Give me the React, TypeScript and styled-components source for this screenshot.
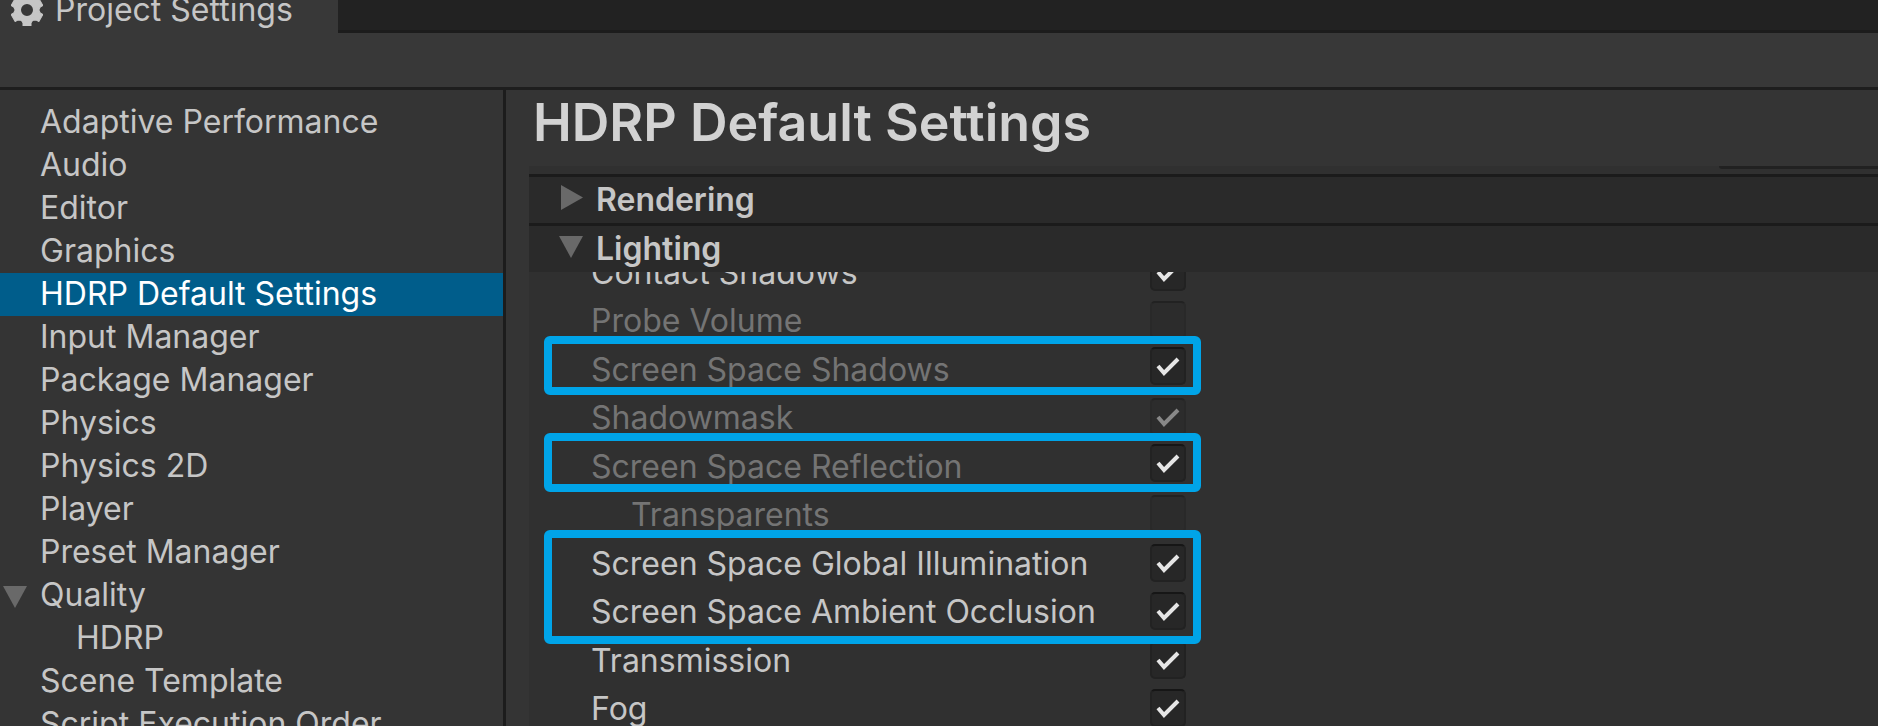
import React from "react";
import styled, { createGlobalStyle, css } from "styled-components";

const GlobalStyle = createGlobalStyle`
  *, *::before, *::after { box-sizing: border-box; }
  body {
    margin: 0;
    background: #303030;
    color: #c6c6c6;
    font-family: Inter, "Liberation Sans", sans-serif;
    font-size: 32px;
    line-height: 40px;
    overflow: hidden;
  }
`;

const Window = styled.div`
  display: flex;
  flex-direction: column;
  height: 100vh;
  overflow: hidden;
  background: #383838;
`;

const TabBar = styled.div`
  display: flex;
  flex: none;
  height: 33px;
  white-space: nowrap;
`;

const Tab = styled.button`
  display: flex;
  align-items: flex-end;
  width: 338px;
  padding: 0 0 3px 11px;
  gap: 12px;
  border: 0;
  background: #383838;
  color: inherit;
  font: inherit;
  text-align: left;
`;

const TabIcon = styled.svg`
  flex: none;
  width: 32px;
  height: 32px;
  margin-bottom: 4px;
`;

const TabStrip = styled.div`
  flex: 1;
  background: #222222;
  border-bottom: 3px solid #1c1c1c;
`;

const Toolbar = styled.div`
  flex: none;
  height: 57px;
  border-bottom: 3px solid #1e1e1e;
`;

const Panes = styled.div`
  display: flex;
  flex: 1;
  min-height: 0;
  overflow: hidden;
  background: #343434;
`;

const Sidebar = styled.nav`
  flex: none;
  width: 506px;
  padding-top: 11px;
  border-right: 3px solid #1c1c1c;
`;

const NavList = styled.ul`
  margin: 0;
  padding: 0;
  list-style: none;
`;

const NavLink = styled.a<{ $selected?: boolean; $nested?: boolean }>`
  display: flex;
  align-items: center;
  height: 43px;
  padding: 0 0 2px ${(p) => (p.$nested ? 76 : 3)}px;
  color: ${(p) => (p.$selected ? "#ffffff" : "inherit")};
  background: ${(p) => (p.$selected ? "#005d8b" : "transparent")};
  text-decoration: none;
  white-space: nowrap;
`;

const NavArrow = styled.span`
  display: flex;
  flex: none;
  width: 37px;
  padding-top: 4px;
`;

const Main = styled.main`
  flex: 1;
  min-width: 0;
  padding-left: 23px;
`;

const Title = styled.h1`
  margin: 0;
  padding: 1px 0 11px 4px;
  font-size: 52px;
  line-height: 64px;
  font-weight: 600;
  color: #d2d2d2;
`;

const Panel = styled.div`
  background: #303030;
`;

const ScrollEdge = styled.div`
  height: 8px;
  &::before {
    content: "";
    display: block;
    width: 159px;
    height: 3px;
    margin-left: auto;
    background: #212121;
    border-radius: 0 0 0 3px;
  }
`;

const SectionHeader = styled.h2`
  margin: 0;
  font-size: 32px;
  border-top: 3px solid #1b1b1b;
  background: #2a2a2a;
`;

const SectionButton = styled.button`
  display: flex;
  align-items: center;
  width: 100%;
  height: 46px;
  padding: 0 0 0 30px;
  border: 0;
  background: none;
  color: inherit;
  font: inherit;
  font-weight: 600;
  text-align: left;
`;

const SectionArrow = styled.span`
  display: flex;
  flex: none;
  width: 37px;
  padding-bottom: 5px;
`;

const SectionBody = styled.div`
  overflow: hidden;
`;

const OptionList = styled.div`
  margin-top: -24px;
`;

const Option = styled.label<{ $tall?: boolean; $disabled?: boolean; $nested?: boolean }>`
  display: flex;
  align-items: flex-start;
  width: 657px;
  height: ${(p) => (p.$tall ? 49 : 48)}px;
  padding-left: ${(p) => (p.$nested ? 102 : 62)}px;
  line-height: 50px;
  white-space: nowrap;
  color: ${(p) => (p.$disabled ? "#747474" : "inherit")};
`;

const Highlight = styled.div<{ $multi?: boolean }>`
  position: relative;
  width: 672px;
  &::after {
    content: "";
    position: absolute;
    z-index: 1;
    top: -9px;
    left: 15px;
    right: 0;
    bottom: ${(p) => (p.$multi ? -8 : -2)}px;
    border: 8px solid #00a4e8;
    border-radius: 6px;
    pointer-events: none;
  }
`;

const Check = styled.span<{ $raised?: boolean }>`
  display: grid;
  flex: none;
  margin-top: ${(p) => (p.$raised ? 2 : 5)}px;
  margin-left: auto;
  & > * { grid-area: 1 / 1; }
`;

const CheckInput = styled.input<{ $dim?: boolean }>`
  appearance: none;
  width: 36px;
  height: 38px;
  margin: 0;
  border: 2px solid #222222;
  border-top-color: #161616;
  border-radius: 5px;
  background: #272727;
  ${(p) =>
    p.$dim &&
    css`
      border-color: #292929;
      border-top-color: #222222;
      background: #2c2c2c;
    `}
`;

const CheckMark = styled.svg`
  width: 36px;
  height: 38px;
  pointer-events: none;
`;

function Gear() {
  return (
    <TabIcon viewBox="-16 -16 32 32" aria-hidden="true">
      <circle r="9" fill="none" stroke="#c6c6c6" strokeWidth="6" />
      {[0, 60, 120, 180, 240, 300].map((a) => (
        <path key={a} d="M-6 -10L-4 -13V-16H4V-13L6 -10Z" fill="#c6c6c6" stroke="#c6c6c6" strokeLinejoin="round" transform={`rotate(${a})`} />
      ))}
    </TabIcon>
  );
}

function DownArrow() {
  return (
    <svg width="24" height="22" viewBox="0 0 24 22" aria-hidden="true">
      <path d="M0 0H24L12 22Z" fill="#696969" />
    </svg>
  );
}

function RightArrow() {
  return (
    <svg width="24" height="25" viewBox="0 0 24 25" aria-hidden="true">
      <path d="M2 0V25L24 12.5Z" fill="#696969" />
    </svg>
  );
}

type Item = {
  name: string;
  checked?: boolean;
  dimText?: boolean;
  dimBox?: boolean;
  nested?: boolean;
  tall?: boolean;
  raised?: boolean;
};

function OptionRow({ name, checked, dimText, dimBox, nested, tall, raised }: Item) {
  return (
    <Option $tall={tall} $disabled={dimText} $nested={nested}>
      {name}
      <Check $raised={raised}>
        <CheckInput type="checkbox" defaultChecked={checked} disabled={dimBox} $dim={dimBox} />
        {checked && (
          <CheckMark viewBox="0 0 36 38" aria-hidden="true">
            <path d="M8 19L14 26L28 12" fill="none" stroke={dimBox ? "#888888" : "#e6e6e6"} strokeWidth="4" />
          </CheckMark>
        )}
      </Check>
    </Option>
  );
}

const pages = [
  "Adaptive Performance",
  "Audio",
  "Editor",
  "Graphics",
  "HDRP Default Settings",
  "Input Manager",
  "Package Manager",
  "Physics",
  "Physics 2D",
  "Player",
  "Preset Manager",
  "Quality",
  "HDRP",
  "Scene Template",
  "Script Execution Order",
];

export default function App() {
  return (
    <>
      <GlobalStyle />
      <Window>
        <TabBar>
          <Tab type="button">
            <Gear />
            Project Settings
          </Tab>
          <TabStrip />
        </TabBar>
        <Toolbar />
        <Panes>
          <Sidebar>
            <NavList>
              {pages.map((page) => (
                <li key={page}>
                  <NavLink
                    href="#"
                    $selected={page === "HDRP Default Settings"}
                    $nested={page === "HDRP"}
                  >
                    {page !== "HDRP" && <NavArrow>{page === "Quality" && <DownArrow />}</NavArrow>}
                    {page}
                  </NavLink>
                </li>
              ))}
            </NavList>
          </Sidebar>
          <Main>
            <Title>HDRP Default Settings</Title>
            <Panel>
              <ScrollEdge />
              <SectionHeader>
                <SectionButton type="button" aria-expanded={false}>
                  <SectionArrow><RightArrow /></SectionArrow>
                  Rendering
                </SectionButton>
              </SectionHeader>
              <SectionHeader>
                <SectionButton type="button" aria-expanded={true}>
                  <SectionArrow><DownArrow /></SectionArrow>
                  Lighting
                </SectionButton>
              </SectionHeader>
              <SectionBody>
                <OptionList>
                  <OptionRow name="Contact Shadows" checked />
                  <OptionRow name="Probe Volume" dimText dimBox tall />
                  <Highlight>
                    <OptionRow name="Screen Space Shadows" checked dimText raised />
                  </Highlight>
                  <OptionRow name="Shadowmask" checked dimText dimBox tall />
                  <Highlight>
                    <OptionRow name="Screen Space Reflection" checked dimText raised />
                  </Highlight>
                  <OptionRow name="Transparents" dimText dimBox nested tall />
                  <Highlight $multi>
                    <OptionRow name="Screen Space Global Illumination" checked />
                    <OptionRow name="Screen Space Ambient Occlusion" checked tall />
                  </Highlight>
                  <OptionRow name="Transmission" checked />
                  <OptionRow name="Fog" checked tall />
                </OptionList>
              </SectionBody>
            </Panel>
          </Main>
        </Panes>
      </Window>
    </>
  );
}
